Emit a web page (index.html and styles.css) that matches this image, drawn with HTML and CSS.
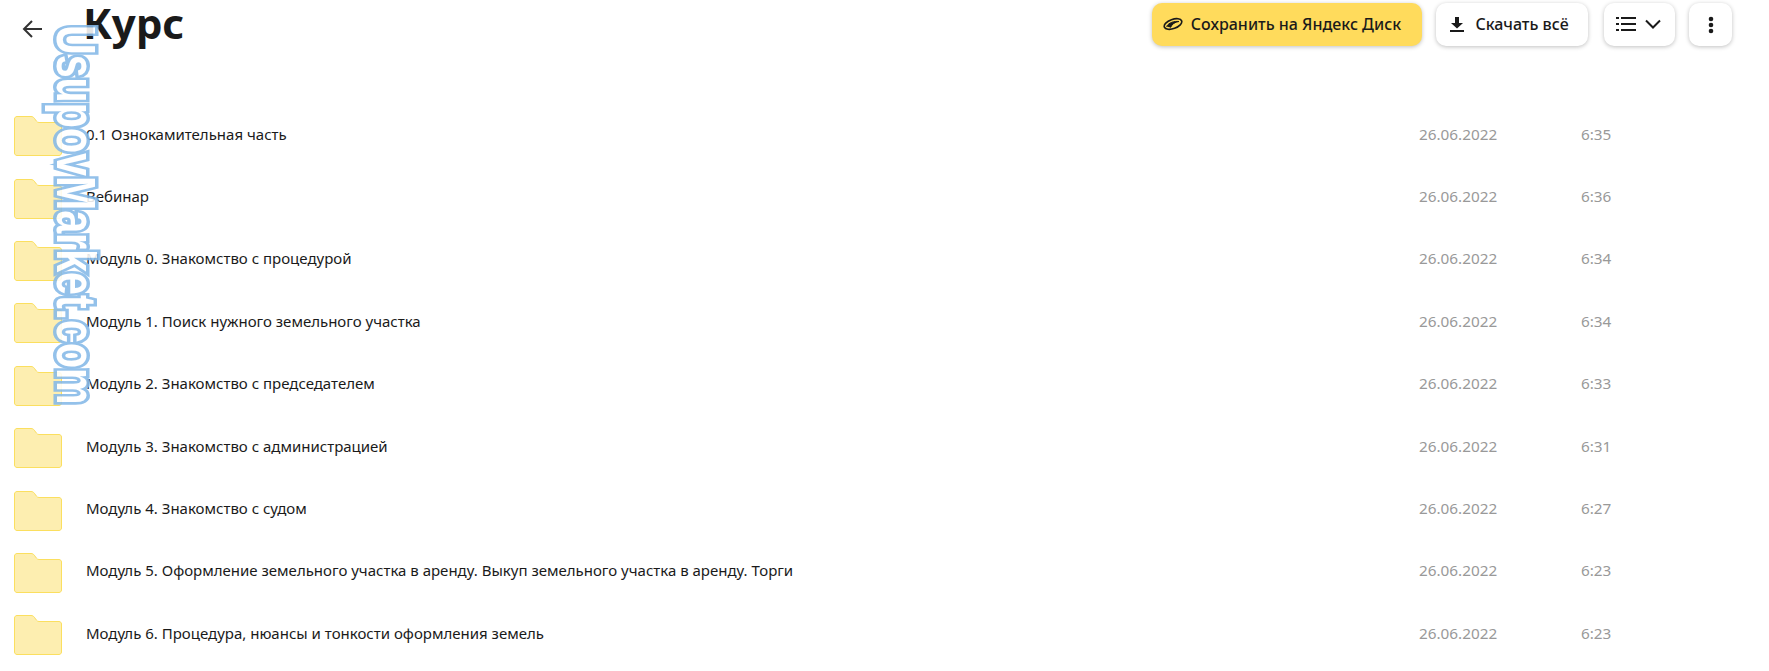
FILE: index.html
```html
<!DOCTYPE html>
<html lang="ru">
<head>
    <meta charset="UTF-8">
    <title>Курс</title>
    <link rel="stylesheet" href="styles.css">
</head>
<body>
    <div class="header">
        <div class="header-left">
            <span class="back">
                <svg width="20" height="20" viewBox="0 0 20 20" fill="none" stroke="#333" stroke-width="2"><path d="M20 10H2M10 2l-8 8 8 8"/></svg>
            </span>
            <h1 class="title">Курс</h1>
        </div>
        <div class="actions">
            <button class="btn btn-yellow">
                <svg width="20" height="14" viewBox="0 0 20 14" fill="none" stroke="#1a1a1a"><ellipse cx="10" cy="7" rx="9.2" ry="4.6" transform="rotate(-20 10 7)" stroke-width="1.6"/><path d="M3.5 9.5C6 5.5 11 4 16 4.5 12 5 9 7 7.5 10.5" fill="#1a1a1a" stroke-width="1"/></svg>
                Сохранить на Яндекс Диск
            </button>
            <button class="btn btn-download">
                <svg width="14" height="15" viewBox="0 0 14 15" fill="#1a1a1a"><path d="M5 0h4v6h4L7 11.5 1 6h4zM0 13h14v2H0z"/></svg>
                Скачать всё
            </button>
            <button class="btn btn-view">
                <svg width="20" height="16" viewBox="0 0 20 16" fill="#1a1a1a"><path d="M0 1h3v2H0zM5 1h15v2H5zM0 7h3v2H0zM5 7h15v2H5zM0 13h3v2H0zM5 13h15v2H5z"/></svg>
                <svg width="16" height="10" viewBox="0 0 16 10" fill="none" stroke="#1a1a1a" stroke-width="2"><path d="M1 1.500l7 7 7-7"/></svg>
            </button>
            <button class="btn btn-more">
                <svg width="6" height="18" viewBox="0 0 6 18" fill="#1a1a1a"><circle cx="3" cy="3" r="2.3"/><circle cx="3" cy="9" r="2.3"/><circle cx="3" cy="15" r="2.3"/></svg>
            </button>
        </div>
    </div>

    <ul class="list">
        <li class="row"><svg class="folder" viewBox="0 0 48 40"><path d="M3 .5h14c1.500 0 2.500 .6 3.300 1.700l2.200 3c.6 .8 1.300 1.300 2.500 1.300h20c1.400 0 2.500 1.100 2.500 2.500V37c0 1.400-1.100 2.500-2.500 2.500H3C1.600 39.500 .5 38.400 .5 37V3C.5 1.600 1.600 .5 3 .5z"/></svg><span class="name">0.1 Ознокамительная часть</span><span class="date">26.06.2022</span><span class="time">6:35</span></li>
        <li class="row"><svg class="folder" viewBox="0 0 48 40"><path d="M3 .5h14c1.500 0 2.500 .6 3.300 1.700l2.200 3c.6 .8 1.300 1.300 2.500 1.300h20c1.400 0 2.500 1.100 2.500 2.500V37c0 1.400-1.100 2.500-2.500 2.500H3C1.600 39.500 .5 38.400 .5 37V3C.5 1.600 1.600 .5 3 .5z"/></svg><span class="name">Вебинар</span><span class="date">26.06.2022</span><span class="time">6:36</span></li>
        <li class="row"><svg class="folder" viewBox="0 0 48 40"><path d="M3 .5h14c1.500 0 2.500 .6 3.300 1.700l2.200 3c.6 .8 1.300 1.300 2.500 1.300h20c1.400 0 2.500 1.100 2.500 2.500V37c0 1.400-1.100 2.500-2.500 2.500H3C1.600 39.500 .5 38.400 .5 37V3C.5 1.600 1.600 .5 3 .5z"/></svg><span class="name">Модуль 0. Знакомство с процедурой</span><span class="date">26.06.2022</span><span class="time">6:34</span></li>
        <li class="row"><svg class="folder" viewBox="0 0 48 40"><path d="M3 .5h14c1.500 0 2.500 .6 3.300 1.700l2.200 3c.6 .8 1.300 1.300 2.500 1.300h20c1.400 0 2.500 1.100 2.500 2.500V37c0 1.400-1.100 2.500-2.500 2.500H3C1.600 39.500 .5 38.400 .5 37V3C.5 1.600 1.600 .5 3 .5z"/></svg><span class="name">Модуль 1. Поиск нужного земельного участка</span><span class="date">26.06.2022</span><span class="time">6:34</span></li>
        <li class="row"><svg class="folder" viewBox="0 0 48 40"><path d="M3 .5h14c1.500 0 2.500 .6 3.300 1.700l2.200 3c.6 .8 1.300 1.300 2.500 1.300h20c1.400 0 2.500 1.100 2.500 2.500V37c0 1.400-1.100 2.500-2.500 2.500H3C1.600 39.500 .5 38.400 .5 37V3C.5 1.600 1.600 .5 3 .5z"/></svg><span class="name">Модуль 2. Знакомство с председателем</span><span class="date">26.06.2022</span><span class="time">6:33</span></li>
        <li class="row"><svg class="folder" viewBox="0 0 48 40"><path d="M3 .5h14c1.500 0 2.500 .6 3.300 1.700l2.200 3c.6 .8 1.300 1.300 2.500 1.300h20c1.400 0 2.500 1.100 2.500 2.500V37c0 1.400-1.100 2.500-2.500 2.500H3C1.600 39.500 .5 38.400 .5 37V3C.5 1.600 1.600 .5 3 .5z"/></svg><span class="name">Модуль 3. Знакомство с администрацией</span><span class="date">26.06.2022</span><span class="time">6:31</span></li>
        <li class="row"><svg class="folder" viewBox="0 0 48 40"><path d="M3 .5h14c1.500 0 2.500 .6 3.300 1.700l2.200 3c.6 .8 1.300 1.300 2.500 1.300h20c1.400 0 2.500 1.100 2.500 2.500V37c0 1.400-1.100 2.500-2.500 2.500H3C1.600 39.500 .5 38.400 .5 37V3C.5 1.600 1.600 .5 3 .5z"/></svg><span class="name">Модуль 4. Знакомство с судом</span><span class="date">26.06.2022</span><span class="time">6:27</span></li>
        <li class="row"><svg class="folder" viewBox="0 0 48 40"><path d="M3 .5h14c1.500 0 2.500 .6 3.300 1.700l2.200 3c.6 .8 1.300 1.300 2.500 1.300h20c1.400 0 2.500 1.100 2.500 2.500V37c0 1.400-1.100 2.500-2.500 2.500H3C1.600 39.500 .5 38.400 .5 37V3C.5 1.600 1.600 .5 3 .5z"/></svg><span class="name">Модуль 5. Оформление земельного участка в аренду. Выкуп земельного участка в аренду. Торги</span><span class="date">26.06.2022</span><span class="time">6:23</span></li>
        <li class="row"><svg class="folder" viewBox="0 0 48 40"><path d="M3 .5h14c1.500 0 2.500 .6 3.300 1.700l2.200 3c.6 .8 1.300 1.300 2.500 1.300h20c1.400 0 2.500 1.100 2.500 2.500V37c0 1.400-1.100 2.500-2.500 2.500H3C1.600 39.500 .5 38.400 .5 37V3C.5 1.600 1.600 .5 3 .5z"/></svg><span class="name">Модуль 6. Процедура, нюансы и тонкости оформления земель</span><span class="date">26.06.2022</span><span class="time">6:23</span></li>
    </ul>

    <!-- watermark lies over the list -->
    <div class="watermark">UsupovMarket.com</div>
</body>
</html>
```

FILE: styles.css
```css
* {
    box-sizing: border-box;
}

html, body {
    margin: 0;
    padding: 0;
    height: 100%;
    overflow: hidden;
    background-color: white;
}

body {
    position: relative;
    font-family: 'Noto Sans', 'Liberation Sans', sans-serif;
    color: #1a1a1a;
}

/* Top bar */
.header {
    display: flex;
    justify-content: space-between;
    align-items: flex-start;
    height: 105px;
    padding: 3px 37px 0 24px;
}

.header-left {
    display: flex;
    align-items: flex-start;
}

.back {
    display: flex;
    margin: 16px 0 0 -2px;
}

.title {
    margin: -2px 0 0 41px;
    font-size: 42px;
    line-height: 44px;
    font-weight: 700;
}

.actions {
    display: flex;
}

.btn {
    display: flex;
    align-items: center;
    justify-content: center;
    height: 43px;
    padding: 0 0 1px;
    border: none;
    border-radius: 10px;
    background: white;
    color: #1a1a1a;
    font-family: inherit;
    font-size: 16px;
    font-weight: 500;
    box-shadow: 0 1px 4px rgba(0, 0, 0, 0.25);
}

.btn-yellow {
    width: 270px;
    gap: 8px;
    margin-right: 14px;
    padding-right: 10px;
    background: #ffdb5c;
}

.btn-download {
    width: 152px;
    gap: 11px;
    margin-right: 16px;
    padding-right: 5px;
}

.btn-view {
    width: 71px;
    gap: 9px;
    margin-right: 14px;
    padding-right: 2px;
}

.btn-more {
    width: 43px;
    padding: 0;
}

/* Folder list */
.list {
    margin: 0;
    padding: 0;
    list-style: none;
}

.row {
    display: flex;
    align-items: center;
    height: 62.4px;
    padding-left: 14px;
    font-size: 15px;
}

.folder {
    flex: none;
    width: 48px;
    height: 40px;
    margin-right: 24px;
}

.folder path {
    fill: #fdeeb0;
    stroke: #fbdf5f;
}

.name {
    flex: 1;
    padding-bottom: 5px;
    white-space: nowrap;
}

.date {
    width: 162px;
    padding-bottom: 5px;
    font-size: 15.3px;
    color: #999;
}

.time {
    width: 188px;
    padding-bottom: 5px;
    font-size: 15.3px;
    color: #999;
}

/* Watermark */
.watermark {
    position: absolute;
    left: 98px;
    top: 25px;
    transform-origin: 0 0;
    transform: rotate(90deg) scaleX(0.735);
    font-family: 'Liberation Sans', sans-serif;
    font-size: 56px;
    line-height: 44px;
    font-weight: 700;
    white-space: nowrap;
    color: white;
    opacity: 0.88;
    -webkit-text-stroke: 7px #85b9e8;
    paint-order: stroke fill;
}
```
